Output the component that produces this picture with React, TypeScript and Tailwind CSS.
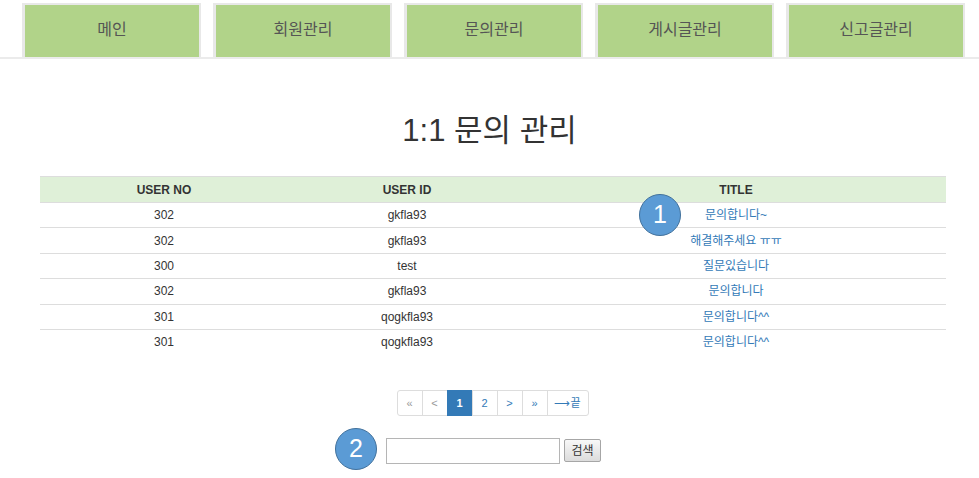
import { Fragment } from 'react';

const menus = ['메인', '회원관리', '문의관리', '게시글관리', '신고글관리'];

const rows = [
  { no: 302, id: 'gkfla93', title: '문의합니다~' },
  { no: 302, id: 'gkfla93', title: '해결해주세요 ㅠㅠ' },
  { no: 300, id: 'test', title: '질문있습니다' },
  { no: 302, id: 'gkfla93', title: '문의합니다' },
  { no: 301, id: 'qogkfla93', title: '문의합니다^^' },
  { no: 301, id: 'qogkfla93', title: '문의합니다^^' },
];

const pages = [
  { label: '«', muted: true },
  { label: '<', muted: true },
  { label: '1', active: true },
  { label: '2' },
  { label: '>' },
  { label: '»' },
];

function Marker({ n, className }: { n: number; className: string }) {
  return (
    <div
      className={`absolute flex size-[42px] items-center justify-center rounded-full border border-[#41719c] bg-[#5b9bd5] text-[25px] font-light text-white ${className}`}
    >
      {n}
    </div>
  );
}

export default function App() {
  return (
    <div className="relative min-h-screen bg-white font-['Liberation_Sans','Noto_Sans_CJK_KR',sans-serif] text-[#333]">
      <nav className="flex gap-[12px] border-b-2 border-[#ebebeb] pl-[22px] pt-[3px]">
        {menus.map((m) => (
          <div
            key={m}
            className="flex h-[54px] w-[179px] items-center justify-center border-2 border-b-0 border-l-[3px] border-[#e8e8e8] bg-[#b1d389] pb-[2px] text-[16px] text-[#555]"
          >
            {m}
          </div>
        ))}
      </nav>

      <h2 className="mt-[52px] text-center text-[31px] leading-[40px] text-[#333]">
        1:1 문의 관리
      </h2>

      <table className="mx-[40px] mt-[25px] w-[906px] border-collapse text-[12px]">
        <thead>
          <tr className="bg-[#dff0d8]">
            <th className="h-[26px] w-[248px] border-y border-[#ddd] p-0 font-bold">USER NO</th>
            <th className="h-[26px] w-[238px] border-y border-[#ddd] p-0 font-bold">USER ID</th>
            <th className="h-[26px] border-y border-[#ddd] p-0 font-bold">TITLE</th>
          </tr>
        </thead>
        <tbody>
          {rows.map((r, i) => (
            <Fragment key={i}>
              <tr className={i > 0 ? 'border-t border-[#ddd]' : ''}>
                <td className="h-[25.4px] p-0 text-center">{r.no}</td>
                <td className="h-[25.4px] p-0 text-center">{r.id}</td>
                <td className="h-[25.4px] p-0 text-center text-[#337ab7]">{r.title}</td>
              </tr>
            </Fragment>
          ))}
        </tbody>
      </table>

      <div className="mt-[35px] flex justify-center pl-[6px]">
        <ul className="flex text-[11px]">
          {pages.map((p, i) => (
            <li
              key={i}
              className={`-ml-px flex h-[26px] w-[26px] items-center justify-center border first:ml-0 first:rounded-l-[3px] ${
                p.active
                  ? 'border-[#337ab7] bg-[#337ab7] font-bold text-white'
                  : p.muted
                    ? 'border-[#ddd] text-[#999]'
                    : 'border-[#ddd] text-[#337ab7]'
              }`}
            >
              {p.label}
            </li>
          ))}
          <li className="-ml-px flex h-[26px] w-[42px] items-center justify-center rounded-r-[3px] border border-[#ddd] text-[#337ab7]">
            ⟶끝
          </li>
        </ul>
      </div>

      <div className="mt-[22px] flex items-center justify-center gap-[4px] pl-[8px]">
        <input className="h-[26px] w-[174px] border border-[#b5b5b5] bg-white px-1 text-[12px] outline-none" />
        <button className="h-[23px] w-[37px] rounded-[2px] border border-[#a6a6a6] bg-gradient-to-b from-[#f8f8f8] to-[#dcdcdc] text-[12px] text-[#333]">
          검색
        </button>
      </div>

      <Marker n={1} className="left-[639px] top-[194px]" />
      <Marker n={2} className="left-[335px] top-[428px]" />
    </div>
  );
}
